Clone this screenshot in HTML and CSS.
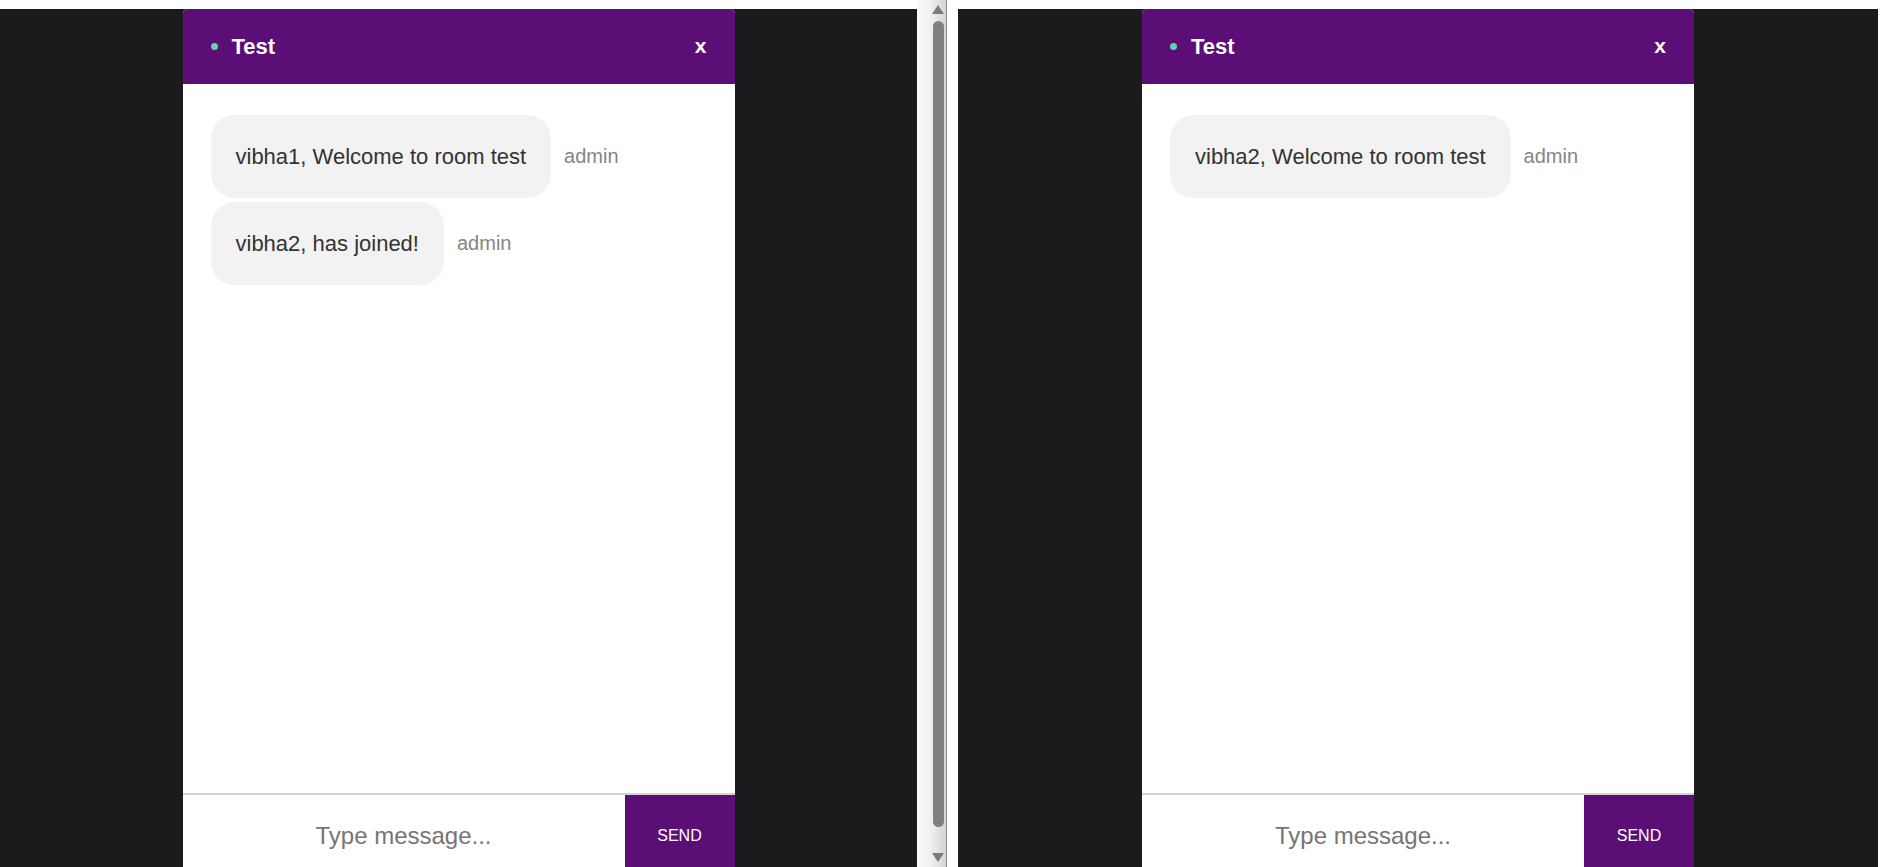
FILE: index.html
```html
<!DOCTYPE html>
<html lang="en">
<head>
<meta charset="utf-8">
<title>Chat</title>
<link rel="stylesheet" href="styles.css">
</head>
<body>
<div class="screen">
  <div class="frame frame-left">
    <div class="viewport">
      <div class="stage">
        <div class="chat">
          <div class="chat-header">
            <div class="room">
              <span class="status-dot"></span>
              <span class="room-name">Test</span>
            </div>
            <span class="close">x</span>
          </div>
          <div class="messages">
            <div class="msg">
              <div class="bubble">vibha1, Welcome to room test</div>
              <span class="sender">admin</span>
            </div>
            <div class="msg">
              <div class="bubble">vibha2, has joined!</div>
              <span class="sender">admin</span>
            </div>
          </div>
          <div class="composer">
            <input class="composer-input" type="text" placeholder="Type message...">
            <button class="send-btn">SEND</button>
          </div>
        </div>
      </div>
    </div>
    <div class="scrollbar">
      <span class="arrow arrow-up"></span>
      <span class="thumb"></span>
      <span class="arrow arrow-down"></span>
    </div>
  </div>
  <div class="frame frame-right">
    <div class="viewport">
      <div class="stage">
        <div class="chat">
          <div class="chat-header">
            <div class="room">
              <span class="status-dot"></span>
              <span class="room-name">Test</span>
            </div>
            <span class="close">x</span>
          </div>
          <div class="messages">
            <div class="msg">
              <div class="bubble">vibha2, Welcome to room test</div>
              <span class="sender">admin</span>
            </div>
          </div>
          <div class="composer">
            <input class="composer-input" type="text" placeholder="Type message...">
            <button class="send-btn">SEND</button>
          </div>
        </div>
      </div>
    </div>
  </div>
</div>
</body>
</html>
```
FILE: styles.css
```css
html, body {
  margin: 0;
  padding: 0;
  background: #ffffff;
  font-family: "Liberation Sans", Arial, sans-serif;
  overflow: hidden;
}

.screen {
  display: flex;
  width: 1885px;
  height: 867px;
  overflow: hidden;
}

.frame {
  display: flex;
  height: 867px;
}

.frame-left {
  width: 947px;
}

.frame-right {
  width: 920px;
  margin-left: 11px;
}

.viewport {
  flex: 1;
  display: flex;
  flex-direction: column;
  padding-top: 9px;
  overflow: hidden;
}

.stage {
  flex: 1;
  background: #1b1b1d;
  display: flex;
  justify-content: center;
  overflow: hidden;
}

.chat {
  width: 552px;
  height: 868px;
  flex-shrink: 0;
  display: flex;
  flex-direction: column;
  background: #ffffff;
  border-radius: 5px 5px 0 0;
}

.chat-header {
  height: 75px;
  flex-shrink: 0;
  background: #5a0e76;
  border-radius: 5px 5px 0 0;
  display: flex;
  align-items: center;
  justify-content: space-between;
  padding: 0 28px;
  color: #ffffff;
}

.room {
  display: flex;
  align-items: center;
  gap: 14px;
}

.status-dot {
  width: 7px;
  height: 7px;
  border-radius: 50%;
  background: #5fd6a6;
}

.room-name {
  font-size: 22px;
  font-weight: bold;
}

.close {
  font-size: 21px;
  font-weight: bold;
  line-height: 1;
  margin-top: -2px;
}

.messages {
  flex: 1;
  display: flex;
  flex-direction: column;
  align-items: flex-start;
  gap: 4px;
  padding: 31px 28px;
}

.msg {
  display: flex;
  align-items: center;
  gap: 13px;
}

.bubble {
  background: #f2f2f2;
  color: #333333;
  font-size: 22px;
  line-height: 25px;
  padding: 29px 25px;
  border-radius: 24px;
}

.sender {
  color: #858585;
  font-size: 20px;
}

.composer {
  height: 82px;
  flex-shrink: 0;
  border-top: 2px solid #d3d3d3;
  display: flex;
}

.composer-input {
  flex: 1;
  min-width: 0;
  border: none;
  outline: none;
  background: #ffffff;
  font-family: "Liberation Sans", Arial, sans-serif;
  font-size: 24px;
  text-align: center;
  padding: 0 10px;
  color: #333333;
}

.composer-input::placeholder {
  color: #757575;
}

.send-btn {
  width: 110px;
  border: none;
  background: #5a0e76;
  color: #ffffff;
  font-family: "Liberation Sans", Arial, sans-serif;
  font-size: 16px;
  padding: 0;
}

.scrollbar {
  width: 30px;
  height: 867px;
  border-right: 1px solid #8a8a8a;
  background: linear-gradient(to right, #fbfbfb 0%, #f1f1f1 45%, #d4d4d4 100%);
  display: flex;
  flex-direction: column;
  align-items: center;
  padding-left: 13px;
  padding-top: 5px;
  box-sizing: border-box;
}

.arrow {
  width: 0;
  height: 0;
  border-left: 6.5px solid transparent;
  border-right: 6.5px solid transparent;
}

.arrow-up {
  border-bottom: 9px solid #7c7c7c;
}

.arrow-down {
  border-top: 9px solid #7c7c7c;
  margin-top: 26px;
}

.thumb {
  width: 11px;
  height: 806px;
  margin-top: 7px;
  border-radius: 6px;
  background: #808080;
}
```
